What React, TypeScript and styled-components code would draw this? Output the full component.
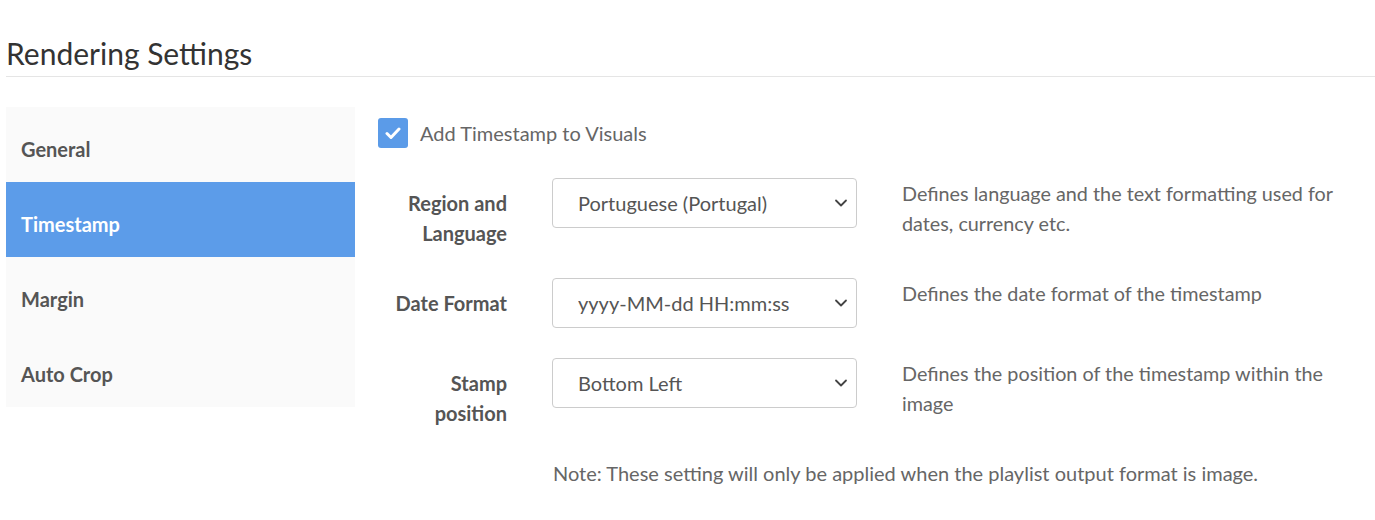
import React from 'react';
import styled, { createGlobalStyle } from 'styled-components';

const GlobalStyle = createGlobalStyle`
	html, body {
		margin: 0;
		padding: 0;
		background: #ffffff;
		font-family: Lato, 'Liberation Sans', sans-serif;
		color: #555;
	}
`;

const Page = styled.main`
	padding: 35px 0 0 6px;
`;

const Title = styled.h1`
	margin: 0;
	font-size: 30px;
	line-height: 36px;
	font-weight: 400;
	color: #333;
	padding-bottom: 5px;
	border-bottom: 1px solid #e5e5e5;
`;

const Body = styled.div`
	display: flex;
	align-items: flex-start;
	gap: 23px;
	margin-top: 30px;
`;

const Sidebar = styled.nav`
	width: 349px;
	flex: none;
	background: #fafafa;
	display: flex;
	flex-direction: column;
`;

const NavItem = styled.a<{ $active?: boolean }>`
	display: flex;
	align-items: center;
	box-sizing: border-box;
	height: 75px;
	padding: 8px 0 0 15px;
	font-size: 20px;
	font-weight: 700;
	color: ${(p) => (p.$active ? '#fff' : '#555')};
	background: ${(p) => (p.$active ? '#5c9ce9' : 'transparent')};
	cursor: pointer;
`;

const Content = styled.section`
	flex: 1;
	padding-top: 11px;
	padding-right: 15px;
`;

const CheckRow = styled.label`
	display: flex;
	align-items: center;
	gap: 12px;
	font-size: 20px;
	color: #666;
	margin-bottom: 30px;
`;

const CheckBox = styled.span`
	width: 30px;
	height: 30px;
	border-radius: 3px;
	background: #5b9be8;
	display: flex;
	align-items: center;
	justify-content: center;
`;

const FormRow = styled.div`
	display: grid;
	grid-template-columns: 129px 305px 1fr;
	column-gap: 45px;
	align-items: start;
	margin-bottom: 30px;
`;

const FieldLabel = styled.div`
	padding-top: 10px;
	text-align: right;
	font-size: 20px;
	line-height: 30px;
	font-weight: 700;
	color: #555;
`;

const SelectWrap = styled.div`
	position: relative;
	height: 50px;
`;

const Select = styled.select`
	appearance: none;
	-webkit-appearance: none;
	width: 100%;
	height: 50px;
	box-sizing: border-box;
	border: 1px solid #ccc;
	border-radius: 4px;
	background: #fff;
	padding: 0 40px 0 25px;
	font-family: Lato, 'Liberation Sans', sans-serif;
	font-size: 20px;
	color: #555;
	outline: none;
`;

const Chevron = styled.svg`
	position: absolute;
	right: 9px;
	top: 19px;
	pointer-events: none;
`;

const Help = styled.p`
	margin: 0;
	font-size: 19.8px;
	line-height: 30px;
	color: #666;
`;

const Note = styled.p`
	margin: 0 0 0 175px;
	font-size: 20px;
	line-height: 30px;
	color: #666;
`;

interface Field {
	label: string[];
	value: string;
	help: string;
}

const fields: Field[] = [
	{
		label: ['Region and', 'Language'],
		value: 'Portuguese (Portugal)',
		help: 'Defines language and the text formatting used for dates, currency etc.'
	},
	{
		label: ['Date Format'],
		value: 'yyyy-MM-dd HH:mm:ss',
		help: 'Defines the date format of the timestamp'
	},
	{
		label: ['Stamp', 'position'],
		value: 'Bottom Left',
		help: 'Defines the position of the timestamp within the image'
	}
];

const tabs = ['General', 'Timestamp', 'Margin', 'Auto Crop'];

export default function App() {
	return (
		<Page>
			<GlobalStyle />
			<Title>Rendering Settings</Title>
			<Body>
				<Sidebar>
					{tabs.map((tab) => (
						<NavItem key={tab} $active={tab === 'Timestamp'}>
							{tab}
						</NavItem>
					))}
				</Sidebar>
				<Content>
					<CheckRow>
						<CheckBox>
							<svg width="16" height="13" viewBox="0 0 16 13">
								<path d="M2 6.5 L6 10.5 L14 2" fill="none" stroke="#fff" strokeWidth="3" strokeLinecap="round" strokeLinejoin="round" />
							</svg>
						</CheckBox>
						Add Timestamp to Visuals
					</CheckRow>
					{fields.map((f) => (
						<FormRow key={f.value}>
							<FieldLabel>
								{f.label.map((line) => (
									<div key={line}>{line}</div>
								))}
							</FieldLabel>
							<SelectWrap>
								<Select defaultValue={f.value}>
									<option>{f.value}</option>
								</Select>
								<Chevron width="14" height="12" viewBox="0 0 14 12">
									<path d="M2 3.5 L7 8.5 L12 3.5" fill="none" stroke="#444" strokeWidth="1.8" strokeLinecap="round" strokeLinejoin="round" />
								</Chevron>
							</SelectWrap>
							<Help>{f.help}</Help>
						</FormRow>
					))}
					<Note>Note: These setting will only be applied when the playlist output format is image.</Note>
				</Content>
			</Body>
		</Page>
	);
}
